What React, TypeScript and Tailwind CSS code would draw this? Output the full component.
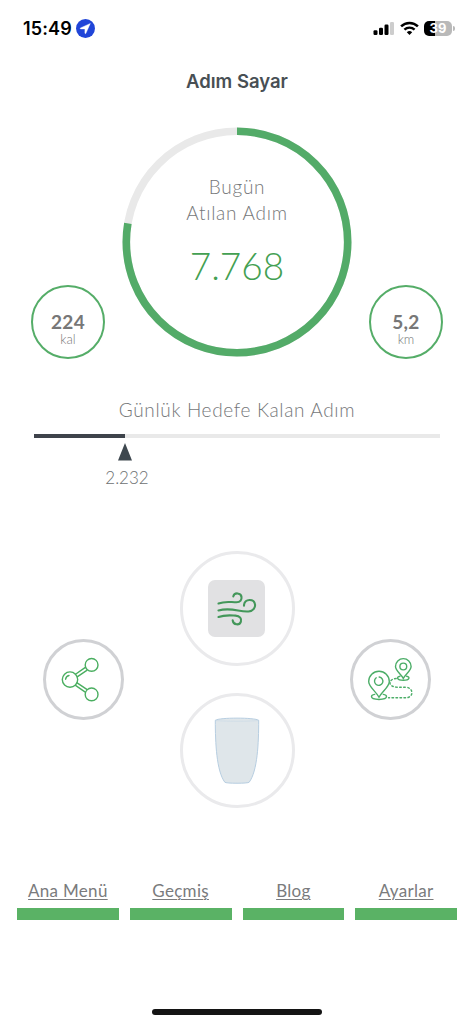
import React from 'react';

function StatusBar() {
  return (
    <header className="flex h-[57px] items-center justify-between pr-[19px] pl-[23px]">
      <div className="flex items-center gap-1">
        <span className="font-['Inter',sans-serif] text-[18px] leading-6 font-semibold tracking-[0.15px] text-black">15:49</span>
        <svg width="19" height="19" viewBox="0 0 19 19">
          <circle cx="9.5" cy="9.5" r="9.5" fill="#2045d8" />
          <path d="M14.3 4.5 9.9 14.3c-.3.6-1 .4-1-.2V9.9H4.7c-.6 0-.8-.8-.2-1Z" fill="#fff" stroke="#fff" strokeWidth=".4" strokeLinejoin="round" />
        </svg>
      </div>
      <div className="flex items-center">
        <svg width="22" height="15" viewBox="0 0 22 15">
          <rect x=".5" y="9.3" width="4" height="4.7" rx="1.2" />
          <rect x="6" y="6.8" width="4" height="7.2" rx="1.2" />
          <rect x="11.5" y="3.5" width="4" height="10.5" rx="1.2" />
          <rect x="17" y="1" width="4" height="13" rx="1.2" fill="#cdcdcd" />
        </svg>
        <svg className="ml-[5px]" width="19" height="15" viewBox="0 0 19 15" fill="none" stroke="#000">
          <path d="M1.1 5.4a12 12 0 0 1 16.8 0" strokeWidth="2.5" />
          <path d="M4.4 8.7a7.4 7.4 0 0 1 10.2 0" strokeWidth="2.4" />
          <path d="m6.8 11.2 2.7 2.8 2.7-2.8a4 4 0 0 0-5.4 0Z" fill="#000" stroke="none" />
        </svg>
        <div className="ml-[5px] flex h-[15px] w-[28px] items-center justify-center rounded-[5px] bg-[linear-gradient(90deg,#000_0_39%,#b9b9b9_39%)]">
          <span className="font-['Inter',sans-serif] text-[13px] leading-[15px] font-bold text-white">39</span>
        </div>
        <div className="ml-px h-[5px] w-[2px] rounded-r-full bg-[#b9b9b9]" />
      </div>
    </header>
  );
}

function Stat({ value, unit }: { value: string; unit: string }) {
  return (
    <div className="mb-[-2px] flex size-[74px] flex-col items-center rounded-full border-[2.5px] border-[#55ad68] pt-[24px]">
      <span className="text-[19px] leading-[22px] font-bold tracking-[0.3px] text-[#777]">{value}</span>
      <span className="text-[13px] leading-[13px] font-light text-[#777]">{unit}</span>
    </div>
  );
}

function StepRing() {
  return (
    <div className="grid size-[230px]">
      <svg className="col-start-1 row-start-1" width="230" height="230" viewBox="0 0 230 230" fill="none">
        <circle cx="115" cy="115" r="110.7" stroke="#e9e9e9" strokeWidth="7.6" />
        <circle cx="115" cy="115" r="110.7" stroke="#53ab68" strokeWidth="7.6" pathLength="100" strokeDasharray="77.68 100" transform="rotate(-90 115 115)" />
      </svg>
      <div className="col-start-1 row-start-1 flex flex-col items-center pt-[47px] text-center">
        <p className="text-[19px] leading-[26px] font-light tracking-[0.75px] text-[#757779]">Bugün<br />Atılan Adım</p>
        <p className="mt-[17px] text-[37px] leading-[46px] font-light text-[#43a052]">7.768</p>
      </div>
    </div>
  );
}

function WindIcon() {
  return (
    <svg width="42" height="36" viewBox="0 0 42 36" fill="none" stroke="#43975a" strokeWidth="2.1" strokeLinecap="round">
      <path d="M2.5 12.5c7-2.8 12-1.2 18-1.2 4 0 5.3-2.8 5-5.3-.5-4.5-7.3-4.8-8.2-.6" />
      <path d="M2.5 19.5c13-3.6 21 1.8 30 1 5-.4 7-4 6.5-7.2-.8-5.7-10-6-11 .5v.9" />
      <path d="M2.5 26c6-2.3 11-1.7 17-1.4 4.5.3 6.3 3.2 5.4 6-1.4 4.2-7.6 3.5-8.2-1.3" />
    </svg>
  );
}

function CupIcon() {
  return (
    <svg className="mt-px mr-px" width="46" height="68" viewBox="0 0 46 68" fill="#dfe6ea" stroke="#b7cee1" strokeWidth="1">
      <path d="M1.3 3.3C5 .4 41 .4 44.7 3.3 44.7 26 43.5 54 35.2 65.2c-.9 1.4-23.5 1.4-24.4 0C2.5 54 1.3 26 1.3 3.3Z" />
      <path d="M1.4 3.4c5 1.1 38.2 1.1 43.2 0" strokeOpacity=".35" fill="none" />
    </svg>
  );
}

function ShareIcon() {
  return (
    <svg className="mr-[5px]" width="40" height="46" viewBox="0 0 40 46" fill="none" stroke="#4aae60" strokeWidth="1.4" strokeLinecap="round">
      <circle cx="9" cy="22.6" r="7.7" />
      <circle cx="30.6" cy="7.9" r="6.4" />
      <circle cx="30.6" cy="37.4" r="6.4" />
      <path d="m14.5 17.2 9.5-6.6m-7.8 9.3 9.6-6.6m-11.3 15 9.4 6.5m-7.8-9 9.7 6.5" />
      <path d="M4.6 22.2c.3-2 1.5-3.3 3.4-3.7" />
    </svg>
  );
}

function RouteIcon() {
  return (
    <svg className="mr-[2px]" width="46" height="46" viewBox="0 0 46 46" fill="none" stroke="#4bad67" strokeWidth="1.4" strokeLinecap="round">
      <path d="M12 40.3C9.2 34.5 1.7 30 1.7 24.5a10.3 10.3 0 1 1 20.6 0C22.3 30 15 34.5 12 40.3Z" />
      <path d="M9.2 20.8a4.2 4.2 0 1 0 3-.8" />
      <path d="M7.7 37.4c-2 .3-3.2 1.1-3.2 2.2 0 3.8 15 3.8 15 0 0-1.1-1.4-1.9-3.2-2.2" />
      <path d="M36.3 21.4c-2.2-4.5-7.8-7.6-7.8-12a7.8 7.8 0 1 1 15.6 0c0 4.4-5.6 7.5-7.8 12Z" />
      <circle cx="36.3" cy="9.5" r="3.4" />
      <path d="M33 19.2c-3.6.6-3.6 4 3.3 4s6.8-3.4 3.3-4" />
      <path d="M29.2 21.5c-8.2.4-8.8 8.5 1.1 8.7h8.6c8 .6 8 10.4 0 10.6H21.5" strokeDasharray="1.6 2.4" />
    </svg>
  );
}

const links = ['Ana Menü', 'Geçmiş', 'Blog', 'Ayarlar'];

export default function App() {
  return (
    <div className="flex h-[1024px] w-[474px] flex-col overflow-hidden bg-white font-['Lato',sans-serif]">
      <StatusBar />
      <h1 className="h-[70px] pt-[12px] text-center font-['Inter',sans-serif] text-[18.5px] leading-6 font-semibold text-[#484f54]">Adım Sayar</h1>
      <section className="flex h-[230px] items-end justify-between px-[31px]">
        <Stat value="224" unit="kal" />
        <StepRing />
        <Stat value="5,2" unit="km" />
      </section>
      <section className="flex h-[194px] flex-col px-[34px] pt-[41px]">
        <h2 className="text-center text-[19px] leading-[24px] font-light tracking-[0.65px] text-[#757779]">Günlük Hedefe Kalan Adım</h2>
        <div className="mt-[12px] h-[4px] w-[406px] bg-[#e9e9e9]">
          <div className="h-full w-[91px] bg-[#3e434b]" />
        </div>
        <div className="mt-[5px] flex w-[182px] flex-col items-center">
          <svg width="14" height="18" viewBox="0 0 14 18"><path d="M7 0 14 17.5H0Z" fill="#3e484f" /></svg>
          <span className="mt-[6px] ml-[4px] text-[17px] leading-[22px] font-light text-[#6d7072]">2.232</span>
        </div>
      </section>
      <section className="flex h-[257px] items-center justify-between px-[43px]">
        <button className="flex size-[81px] items-center justify-center rounded-full border-[3.5px] border-[#d0d1d4]"><ShareIcon /></button>
        <div className="flex flex-col gap-[27px]">
          <button className="flex size-[115px] items-center justify-center rounded-full border-[3px] border-[#eaeaec]">
            <span className="mr-px flex size-[57px] items-center justify-center rounded-[7px] bg-[#e1e1e3]"><WindIcon /></span>
          </button>
          <button className="flex size-[115px] items-center justify-center rounded-full border-[3px] border-[#eaeaec]"><CupIcon /></button>
        </div>
        <button className="flex size-[81px] items-center justify-center rounded-full border-[3.5px] border-[#d0d1d4]"><RouteIcon /></button>
      </section>
      <nav className="mt-[72px] grid grid-cols-4 gap-[11px] px-[17px]">
        {links.map((label) => (
          <a key={label} className="flex flex-col items-center text-[#7a7b7d]">
            <span className="text-[17px] leading-[22px] font-normal tracking-[0.3px] underline decoration-1 underline-offset-2">{label}</span>
            <span className="mt-[6px] h-[12px] w-full bg-[#5ab265]" />
          </a>
        ))}
      </nav>
      <div className="mx-auto mt-[89px] h-[6px] w-[170px] rounded-full bg-[#141414]" />
    </div>
  );
}
